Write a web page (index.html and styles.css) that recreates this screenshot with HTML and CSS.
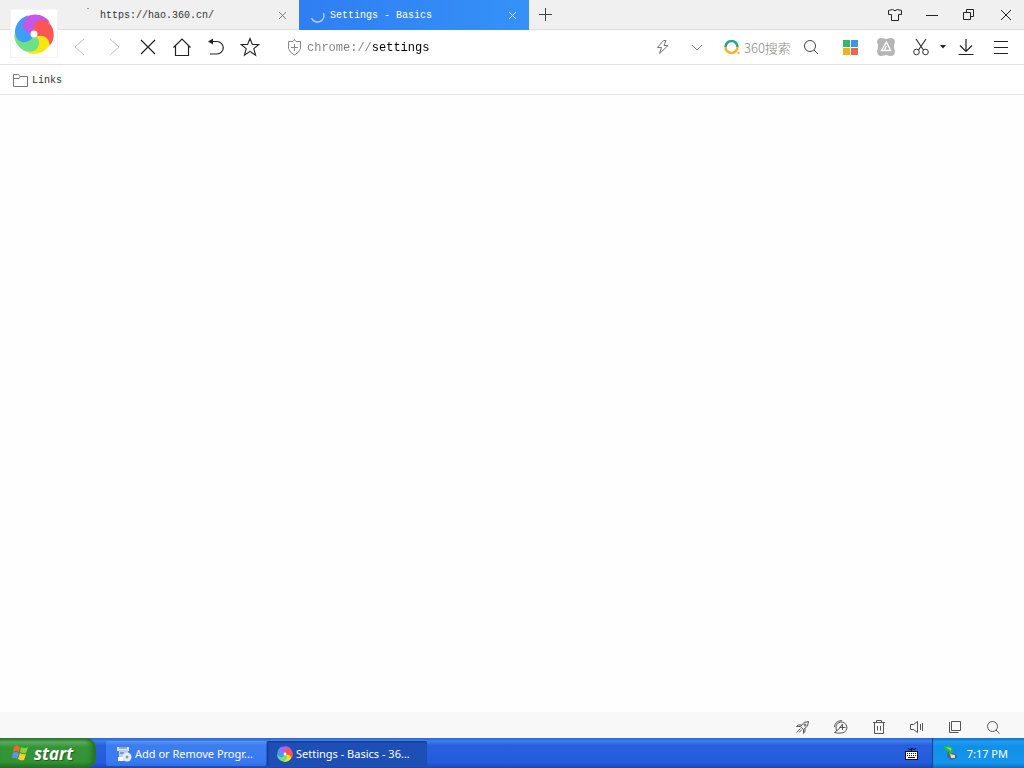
FILE: index.html
```html
<!DOCTYPE html>
<html lang="en">

<head>
    <meta charset="UTF-8">
    <meta name="viewport" content="width=device-width, initial-scale=1.0">
    <title>Settings - Basics</title>
    <link rel="stylesheet" href="styles.css">
</head>

<body>
    <svg class="defs" aria-hidden="true">
        <defs>
            <path id="petal" d="M20 20C9 20 5 9 13 3C20-2 32 1 36 9C29 6 23 11 23 19Z"/>
            <g id="swirl">
                <use href="#petal" fill="#fde50f" transform="rotate(144 20 20)"/>
                <use href="#petal" fill="#6fe088" transform="rotate(216 20 20)"/>
                <use href="#petal" fill="#3f9df5" transform="rotate(288 20 20)"/>
                <use href="#petal" fill="#c457ea"/>
                <use href="#petal" fill="#fb5555" transform="rotate(72 20 20)"/>
                <circle cx="20" cy="20" r="3.500" fill="#fff"/>
            </g>
        </defs>
    </svg>

    <div class="browser">
        <div class="logo">
            <svg width="42" height="42" viewBox="-1 -1 42 42"><use href="#swirl"/></svg>
        </div>

        <div class="tabs">
            <div class="tab">
                <span class="tab-icon"><svg width="16" height="16"><path d="M7 1.500h2" stroke="#999" fill="none"/></svg></span>
                <a class="tab-title" href="#">https://hao.360.cn/</a>
                <button class="tab-close" aria-label="Close tab"><svg width="9" height="9"><path d="M1 1l7 7M8 1l-7 7" stroke="#777" fill="none"/></svg></button>
            </div>
            <div class="tab active">
                <span class="tab-icon"><svg width="16" height="16"><path d="M13.500 6A6.500 6.500 0 0 1 1.500 11" stroke="#a9cffc" stroke-width="1.500" fill="none"/></svg></span>
                <a class="tab-title" href="#">Settings - Basics</a>
                <button class="tab-close" aria-label="Close tab"><svg width="9" height="9"><path d="M1 1l7 7M8 1l-7 7" stroke="#cfe4ff" fill="none"/></svg></button>
            </div>
            <button class="new-tab" aria-label="New tab"><svg width="13" height="13"><path d="M6.500 0v13M0 6.500h13" stroke="#444"/></svg></button>
            <div class="window-buttons">
                <button aria-label="Skins"><svg width="14" height="14"><path d="M4.500 1.500L.5 2.500V6.500H3.500V12.500H10.500V6.500H13.500V2.500L9.500 1.500Q7 4 4.500 1.500Z" stroke="#222" fill="none"/></svg></button>
                <button aria-label="Minimize"><svg width="12" height="12"><path d="M0 6.500h12" stroke="#222"/></svg></button>
                <button aria-label="Restore"><svg width="11" height="11"><path d="M.5 3.500h7v7h-7zM3.500 3.500v-3h7v7h-3" stroke="#222" fill="none"/></svg></button>
                <button aria-label="Close"><svg width="12" height="12"><path d="M1 1l10 10M11 1L1 11" stroke="#222"/></svg></button>
            </div>
        </div>

        <div class="toolbar">
            <div class="nav">
                <button aria-label="Back"><svg width="20" height="20"><path d="M14 2l-9 8 9 8" stroke="#c0c0c0" fill="none"/></svg></button>
                <button aria-label="Forward"><svg width="20" height="20"><path d="M6 2l9 8-9 8" stroke="#c0c0c0" fill="none"/></svg></button>
                <button aria-label="Stop"><svg width="20" height="20"><path d="M3 3l14 14M17 3L3 17" stroke="#222" stroke-width="1.200" fill="none"/></svg></button>
                <button aria-label="Home"><svg width="20" height="20"><path d="M1.500 10.500l8.500-8.500 8.500 8.500M3.500 9v9.500h13V9" stroke="#222" stroke-width="1.200" fill="none"/></svg></button>
                <button aria-label="Restore page"><svg width="20" height="20"><path d="M4 4.500h7a6 6 0 0 1 0 12.500H4" stroke="#222" stroke-width="1.200" fill="none"/><path d="M2 4.500l5-3v6z" fill="#222"/></svg></button>
                <button aria-label="Favorite"><svg width="20" height="20"><path d="M10 1.500l2.400 6h6.400l-5 4.200 1.800 6.600-5.600-3.900-5.600 3.900 1.800-6.600-5-4.200h6.400z" stroke="#222" stroke-width="1.100" fill="none"/></svg></button>
            </div>
            <div class="address">
                <svg width="15" height="17"><path d="M7.500 .5L9 2.500H13.500V9.500Q12 14 7.500 16Q3 14 1.500 9.500V2.500H6Z" stroke="#888" fill="none"/><path d="M7.500 5v7M4 8.500h7" stroke="#888"/></svg>
                <input type="text" value="chrome://settings" aria-label="Address">
                <button aria-label="Speed mode"><svg width="16" height="16"><path d="M8.500 1.500L2.500 8.500H6.500L4.500 14.500L13 6.500H9L11 1.500Z" stroke="#777" fill="none" stroke-linejoin="round"/></svg></button>
                <button aria-label="Show history"><svg width="12" height="12"><path d="M1 4l5 5 5-5" stroke="#777" fill="none"/></svg></button>
            </div>
            <div class="search">
                <svg width="16" height="16"><path d="M1.500 8A6 6 0 0 1 13.500 8" stroke="#22a884" stroke-width="2.500" fill="none"/><path d="M1.500 8A6 6 0 0 0 13.500 8" stroke="#f4b62c" stroke-width="2.500" fill="none"/><circle cx="14.500" cy="14" r="1.200" fill="#f4b62c"/></svg>
                <input type="text" placeholder="360搜索" aria-label="Search">
                <button aria-label="Search"><svg width="16" height="16"><circle cx="7" cy="7" r="5.500" stroke="#444" fill="none"/><path d="M11 11l4 4" stroke="#444"/></svg></button>
            </div>
            <div class="tools">
                <button aria-label="Apps"><svg width="15" height="15"><path d="M0 0h7v7H0z" fill="#31b96b"/><path d="M8 0h7v7H8z" fill="#3b94ea"/><path d="M0 8h7v7H0z" fill="#f5ae1c"/><path d="M8 8h7v7H8z" fill="#f06543"/></svg></button>
                <button aria-label="Extension"><svg width="20" height="20"><path d="M4 1Q7 1 10 2Q13 1 16 1Q19 2 19 5Q17 9 19 14Q19 18 16 19Q13 19 10 18Q7 19 4 19Q1 18 1 14Q3 9 1 5Q1 2 4 1Z" fill="#b5b5b5"/><path d="M10.500 5L14.500 13.500H5.500ZM8.500 13l2-4" stroke="#fff" stroke-width="1.400" fill="none"/></svg></button>
                <button aria-label="Screenshot"><svg width="18" height="18"><path d="M4 1l7.500 11M14 1L6.500 12" stroke="#333" stroke-width="1.200"/><circle cx="4.500" cy="14" r="2.800" stroke="#333" fill="none"/><circle cx="13.500" cy="14" r="2.800" stroke="#333" fill="none"/></svg></button>
                <button class="caret" aria-label="Screenshot options"><svg width="6" height="4"><path d="M0 0h6L3 3.500z" fill="#222"/></svg></button>
                <button aria-label="Downloads"><svg width="16" height="18"><path d="M8 1v12M2 7.500l6 6 6-6M.5 16.500h15" stroke="#222" stroke-width="1.200" fill="none"/></svg></button>
                <button aria-label="Menu"><svg width="14" height="14"><path d="M0 1.500h14M0 7.500h14M0 13.500h14" stroke="#222"/></svg></button>
            </div>
        </div>

        <div class="bookmarks">
            <a href="#"><svg width="15" height="13"><path d="M.5 12.500V.5H5.500L7 2.500H14.500V12.500ZM.5 4.500H6L7.500 2.500" stroke="#777" fill="none"/></svg>Links</a>
        </div>

        <main class="page"></main>

        <div class="status">
            <button aria-label="Accelerate"><svg width="16" height="16"><path d="M13.500 2.500Q8.500 2 5.500 7.500L8.500 10.500Q14 7.500 13.500 2.500ZM6.500 6Q3.500 5 1.500 7.500L5.500 7.500M10 9.500Q11 12 8.500 14.500L8.500 10.500M5.500 9.500l-4 4M7 10.500l-3 3" stroke="#555" fill="none"/><circle cx="10" cy="6" r="1" stroke="#555" fill="none"/></svg></button>
            <button aria-label="Boost"><svg width="16" height="16"><path d="M4 12Q2.500 10 3 7.500A5.500 5.500 0 1 1 8 14Q4 14.500 1.500 13.500Q6 11 9.500 5L9.500 11M6.500 8.500h6M1.500 8Q2 2 9 1.500" stroke="#555" fill="none"/></svg></button>
            <button aria-label="Clear traces"><svg width="14" height="14"><path d="M1 2.500h12M4.500 2V.5h5V2M2.500 2.500v11h9v-11M5.500 6v4.500M8.500 6v4.500" stroke="#555" fill="none"/></svg></button>
            <button aria-label="Sound"><svg width="14" height="14"><path d="M.5 4.500H3.500L7.500 1.500V12.500L3.500 9.500H.5ZM10.500 4v6M12.500 3v8" stroke="#555" fill="none"/></svg></button>
            <button aria-label="Windows"><svg width="14" height="14"><path d="M3.500 1.500h9v9h-9zM1.500 2v10.500h9" stroke="#555" fill="none"/></svg></button>
            <button aria-label="Zoom"><svg width="14" height="14"><circle cx="6.500" cy="6.500" r="5" stroke="#555" fill="none"/><path d="M10 10l3.500 3.500" stroke="#555"/></svg></button>
        </div>
    </div>

    <div class="taskbar">
        <button class="start">
            <svg width="18" height="18"><path d="M3 3Q6 0 9 3L8 8Q5 6 2 8Z" fill="#f26a2c"/><path d="M10 3Q13 5 17 3L15 9Q12 10 9 8Z" fill="#8ccf3c"/><path d="M2 9Q5 7 8 9L6 15Q4 13 1 14Z" fill="#5c94f0"/><path d="M9 9Q12 11 15 10L13 16Q10 17 7 15Z" fill="#fbd02f"/></svg>
            start
        </button>
        <div class="tasks">
            <button class="task">
                <svg width="16" height="16"><path d="M1 1h12v4H1z" fill="#dce6f2"/><path d="M3 4h9l1 11H3z" fill="#b9cfe8"/><path d="M3 2h8M4 7h4" stroke="#4a6d9c"/><circle cx="11" cy="11" r="4.500" fill="#e6edf4"/><circle cx="11" cy="11" r="1.500" fill="#7c9cc0"/><path d="M2 11h5v4H2z" fill="#fff"/></svg>
                <span>Add or Remove Progr...</span>
            </button>
            <button class="task current">
                <svg width="16" height="16" viewBox="0 0 40 40"><use href="#swirl"/></svg>
                <span>Settings - Basics - 36...</span>
            </button>
        </div>
        <button class="keyboard" aria-label="Keyboard layout"><svg width="13" height="13"><path d="M3 1.500l2 1 2-1 2 1 2-1M6.500 2v2" stroke="#111" fill="none"/><path d="M0 4h13v9H0z" fill="#111"/><path d="M1 5h11v7H1z" fill="#fff"/><path d="M2 6.500h10M2 8.500h10" stroke="#111" stroke-dasharray="1 1"/><path d="M3 10.500h7" stroke="#111"/></svg></button>
        <div class="tray">
            <svg width="16" height="16"><path d="M5 7l8 2 1 4-6 2-4-4z" fill="#52606a"/><path d="M7 9l5 1v3l-4 0z" fill="#d5dde0"/><path d="M1 1l8 1 1 6-4 2V6L2 5z" fill="#2fb63b"/><path d="M3 2l5 1v3z" fill="#8be27c"/></svg>
            <time>7:17 PM</time>
        </div>
    </div>
</body>

</html>
```
FILE: styles.css
```css
* {
    box-sizing: border-box;
    padding: 0;
    margin: 0;
}

body {
    min-height: 100vh;
    display: flex;
    flex-direction: column;
    background-color: #fefefe;
    font-family: "Liberation Mono", monospace;
    font-size: 10px;
    color: #333;
}

a {
    color: inherit;
    text-decoration: none;
}

button {
    display: flex;
    align-items: center;
    justify-content: center;
    border: none;
    background: none;
    font: inherit;
    color: inherit;
}

input {
    border: none;
    outline: none;
    background: none;
    min-width: 0;
}

svg {
    flex: none;
}

.defs {
    position: absolute;
    width: 0;
    height: 0;
}

.browser {
    position: relative;
    flex: 1;
    display: flex;
    flex-direction: column;
}

.logo {
    position: absolute;
    left: 10px;
    top: 9px;
    width: 48px;
    height: 49px;
    display: flex;
    align-items: center;
    justify-content: center;
    background-color: #fff;
    border: 1px solid #f4f4f4;
}

.tabs {
    display: flex;
    height: 30px;
    padding-left: 69px;
    background-color: #f0f0f0;
    border-bottom: 1px solid #dcdcdc;
}

.tab {
    display: flex;
    align-items: center;
    width: 230px;
    height: 30px;
    padding: 0 7px 0 11px;
}

.tab.active {
    background: linear-gradient(to right, #2f7ef2, #3591f8);
    color: #fff;
}

.tab-icon {
    height: 16px;
    width: 20px;
}

.tab-title {
    flex: 1;
}

.tab-close {
    width: 20px;
    height: 20px;
}

.new-tab {
    width: 32px;
}

.window-buttons {
    display: flex;
    margin-left: auto;
}

.window-buttons button {
    width: 37px;
}

.toolbar {
    display: flex;
    height: 35px;
    padding: 0 6px 0 63px;
    background-color: #fff;
    border-bottom: 1px solid #e0e0e0;
}

.nav,
.tools,
.address,
.search {
    display: flex;
    align-items: center;
}

.toolbar button {
    width: 34px;
    height: 34px;
}

.address {
    flex: 1;
    margin-left: 20px;
}

.address input {
    flex: 1;
    margin-left: 5px;
    padding-top: 2px;
    font-family: "Liberation Mono", monospace;
    font-size: 12px;
    /* scheme in grey, the rest of the url in black */
    background: linear-gradient(to right, #808080 65px, #000 65px);
    background-clip: text;
    -webkit-background-clip: text;
    color: transparent;
}

.search {
    width: 104px;
    margin-left: 10px;
}

.search input {
    flex: 1;
    margin-left: 4px;
    font-family: "Noto Sans CJK SC", sans-serif;
    font-size: 13px;
    font-weight: 300;
}

.search input::placeholder {
    color: #888;
}

.tools {
    margin-left: 5px;
}

.toolbar .tools button {
    width: 35px;
}

.toolbar .tools .caret {
    width: 10px;
}

.bookmarks {
    display: flex;
    align-items: center;
    height: 30px;
    padding: 2px 0 0 13px;
    background-color: #fff;
    border-bottom: 1px solid #e4e4e4;
}

.bookmarks a {
    display: flex;
    align-items: center;
    gap: 4px;
}

.page {
    flex: 1;
}

.status {
    display: flex;
    justify-content: flex-end;
    height: 26px;
    padding: 4px 12px 0 0;
    background-color: #f8f8f8;
}

.status button {
    width: 38px;
}

.taskbar {
    display: flex;
    align-items: stretch;
    height: 30px;
    background: linear-gradient(#2a66cc, #3c80f0 3px, #2860dc 7px, #245bdb 25px, #1c46ac);
    font-family: "Noto Sans", sans-serif;
    font-size: 11px;
    color: #fff;
}

.start {
    width: 96px;
    gap: 5px;
    padding-right: 12px;
    border-radius: 0 10px 10px 0;
    background: linear-gradient(#2c6e34, #5cad5c 4px, #369438 9px, #329432 24px, #236f24);
    box-shadow: inset -4px 0 5px #247228;
    font-family: "Open Sans", sans-serif;
    font-size: 17px;
    font-weight: bold;
    font-style: italic;
    text-shadow: 1px 1px 1px #225522;
}

.tasks {
    flex: 1;
    display: flex;
    gap: 1px;
    padding: 3px 0 2px 10px;
}

.task {
    width: 160px;
    gap: 3px;
    justify-content: flex-start;
    padding-left: 10px;
    border-radius: 2px;
    background: linear-gradient(#5b96f8, #3c7ef0 4px, #3a7af0 20px, #3270e4);
}

.task.current {
    background: #1e4fb4;
    box-shadow: inset 1px 1px 2px #123a8c;
}

.keyboard {
    width: 40px;
}

.tray {
    display: flex;
    align-items: center;
    gap: 8px;
    padding: 0 16px 0 10px;
    border-left: 1px solid #0d3f9c;
    background: linear-gradient(#1470c8, #1c9ef4 4px, #1290e8 8px, #1494ec 25px, #0e6cc0);
}
```
